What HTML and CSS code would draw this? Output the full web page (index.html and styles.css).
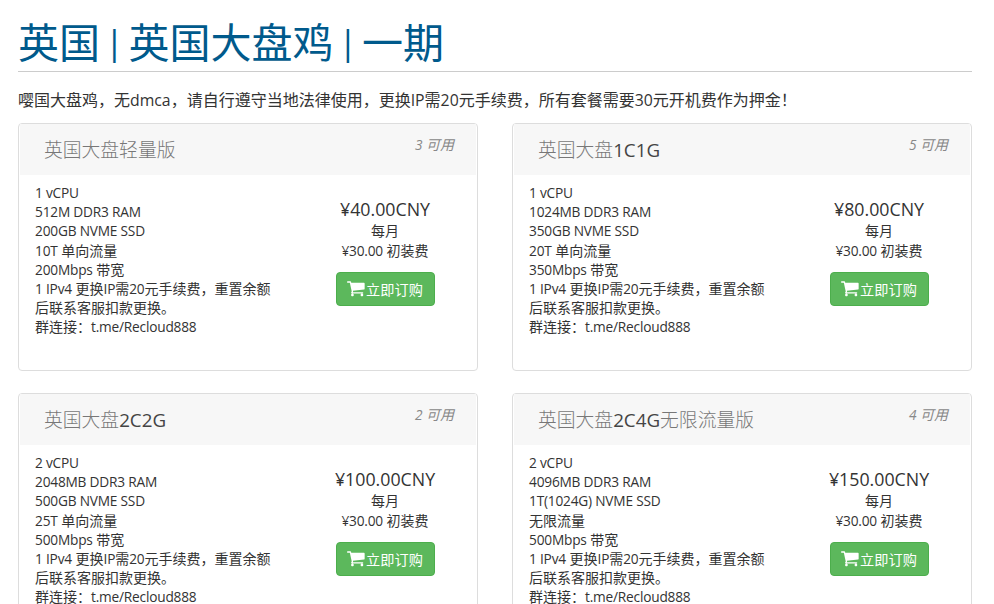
FILE: index.html
```html
<!DOCTYPE html>
<html lang="zh-CN">
<head>
<meta charset="utf-8">
<title>英国大盘鸡</title>
<link rel="stylesheet" href="styles.css">
</head>
<body>
<main class="page">
  <h1 class="title">英国 <span class="pipe">|</span> 英国大盘鸡 <span class="pipe">|</span> 一期</h1>
  <p class="intro">嘤国大盘鸡，无<span class="la">dmca</span>，请自行遵守当地法律使用，更换<span class="la">IP</span>需<span class="la">20</span>元手续费，所有套餐需要<span class="la">30</span>元开机费作为押金！</p>
  <div class="grid">
    <section class="card">
      <header class="card-head"><h2 class="card-title"><span class="cjk">英国大盘轻量版</span></h2><em class="avail"><span class="la">3</span> 可用</em></header>
      <div class="card-body">
        <div class="specs">
          <div class="la">1 vCPU</div>
          <div class="la">512M DDR3 RAM</div>
          <div class="la">200GB NVME SSD</div>
          <div><span class="la">10T</span> 单向流量</div>
          <div><span class="la">200Mbps</span> 带宽</div>
          <div><span class="la">1 IPv4</span> 更换<span class="la">IP</span>需<span class="la">20</span>元手续费，重置余额后联系客服扣款更换。</div>
          <div>群连接：<span class="la">t.me/Recloud888</span></div>
        </div>
        <div class="buy">
          <div class="price">¥40.00CNY</div>
          <div class="term">每月</div>
          <div class="setup"><span class="la">¥30.00</span> 初装费</div>
          <a class="btn" href="#"><svg class="cart" viewBox="0 0 1792 1792"><path d="M640 1408q0 52-38 90t-90 38-90-38-38-90 38-90 90-38 90 38 38 90zm896 0q0 52-38 90t-90 38-90-38-38-90 38-90 90-38 90 38 38 90zm128-1088v512q0 24-16.500 42.500t-40.500 21.500l-1044 122q13 60 13 70 0 16-24 64h920q26 0 45 19t19 45-19 45-45 19h-1024q-26 0-45-19t-19-45q0-11 8-31.500t16-36 21.500-40 15.500-29.500l-177-823h-204q-26 0-45-19t-19-45 19-45 45-19h256q16 0 28.500 6.500t19.500 15.500 13 24.500 8 26 5.500 29.500 4.500 26h1201q26 0 45 19t19 45z"/></svg>立即订购</a>
        </div>
      </div>
    </section>
    <section class="card">
      <header class="card-head"><h2 class="card-title"><span class="cjk">英国大盘</span>1C1G</h2><em class="avail"><span class="la">5</span> 可用</em></header>
      <div class="card-body">
        <div class="specs">
          <div class="la">1 vCPU</div>
          <div class="la">1024MB DDR3 RAM</div>
          <div class="la">350GB NVME SSD</div>
          <div><span class="la">20T</span> 单向流量</div>
          <div><span class="la">350Mbps</span> 带宽</div>
          <div><span class="la">1 IPv4</span> 更换<span class="la">IP</span>需<span class="la">20</span>元手续费，重置余额后联系客服扣款更换。</div>
          <div>群连接：<span class="la">t.me/Recloud888</span></div>
        </div>
        <div class="buy">
          <div class="price">¥80.00CNY</div>
          <div class="term">每月</div>
          <div class="setup"><span class="la">¥30.00</span> 初装费</div>
          <a class="btn" href="#"><svg class="cart" viewBox="0 0 1792 1792"><path d="M640 1408q0 52-38 90t-90 38-90-38-38-90 38-90 90-38 90 38 38 90zm896 0q0 52-38 90t-90 38-90-38-38-90 38-90 90-38 90 38 38 90zm128-1088v512q0 24-16.500 42.500t-40.500 21.500l-1044 122q13 60 13 70 0 16-24 64h920q26 0 45 19t19 45-19 45-45 19h-1024q-26 0-45-19t-19-45q0-11 8-31.500t16-36 21.500-40 15.500-29.500l-177-823h-204q-26 0-45-19t-19-45 19-45 45-19h256q16 0 28.500 6.500t19.500 15.500 13 24.500 8 26 5.500 29.500 4.500 26h1201q26 0 45 19t19 45z"/></svg>立即订购</a>
        </div>
      </div>
    </section>
    <section class="card">
      <header class="card-head"><h2 class="card-title"><span class="cjk">英国大盘</span>2C2G</h2><em class="avail"><span class="la">2</span> 可用</em></header>
      <div class="card-body">
        <div class="specs">
          <div class="la">2 vCPU</div>
          <div class="la">2048MB DDR3 RAM</div>
          <div class="la">500GB NVME SSD</div>
          <div><span class="la">25T</span> 单向流量</div>
          <div><span class="la">500Mbps</span> 带宽</div>
          <div><span class="la">1 IPv4</span> 更换<span class="la">IP</span>需<span class="la">20</span>元手续费，重置余额后联系客服扣款更换。</div>
          <div>群连接：<span class="la">t.me/Recloud888</span></div>
        </div>
        <div class="buy">
          <div class="price">¥100.00CNY</div>
          <div class="term">每月</div>
          <div class="setup"><span class="la">¥30.00</span> 初装费</div>
          <a class="btn" href="#"><svg class="cart" viewBox="0 0 1792 1792"><path d="M640 1408q0 52-38 90t-90 38-90-38-38-90 38-90 90-38 90 38 38 90zm896 0q0 52-38 90t-90 38-90-38-38-90 38-90 90-38 90 38 38 90zm128-1088v512q0 24-16.500 42.500t-40.500 21.500l-1044 122q13 60 13 70 0 16-24 64h920q26 0 45 19t19 45-19 45-45 19h-1024q-26 0-45-19t-19-45q0-11 8-31.500t16-36 21.500-40 15.500-29.500l-177-823h-204q-26 0-45-19t-19-45 19-45 45-19h256q16 0 28.500 6.500t19.500 15.500 13 24.500 8 26 5.500 29.500 4.500 26h1201q26 0 45 19t19 45z"/></svg>立即订购</a>
        </div>
      </div>
    </section>
    <section class="card">
      <header class="card-head"><h2 class="card-title"><span class="cjk">英国大盘</span>2C4G<span class="cjk">无限流量版</span></h2><em class="avail"><span class="la">4</span> 可用</em></header>
      <div class="card-body">
        <div class="specs">
          <div class="la">2 vCPU</div>
          <div class="la">4096MB DDR3 RAM</div>
          <div class="la">1T(1024G) NVME SSD</div>
          <div>无限流量</div>
          <div><span class="la">500Mbps</span> 带宽</div>
          <div><span class="la">1 IPv4</span> 更换<span class="la">IP</span>需<span class="la">20</span>元手续费，重置余额后联系客服扣款更换。</div>
          <div>群连接：<span class="la">t.me/Recloud888</span></div>
        </div>
        <div class="buy">
          <div class="price">¥150.00CNY</div>
          <div class="term">每月</div>
          <div class="setup"><span class="la">¥30.00</span> 初装费</div>
          <a class="btn" href="#"><svg class="cart" viewBox="0 0 1792 1792"><path d="M640 1408q0 52-38 90t-90 38-90-38-38-90 38-90 90-38 90 38 38 90zm896 0q0 52-38 90t-90 38-90-38-38-90 38-90 90-38 90 38 38 90zm128-1088v512q0 24-16.500 42.500t-40.500 21.500l-1044 122q13 60 13 70 0 16-24 64h920q26 0 45 19t19 45-19 45-45 19h-1024q-26 0-45-19t-19-45q0-11 8-31.500t16-36 21.500-40 15.500-29.500l-177-823h-204q-26 0-45-19t-19-45 19-45 45-19h256q16 0 28.500 6.500t19.500 15.500 13 24.500 8 26 5.500 29.500 4.500 26h1201q26 0 45 19t19 45z"/></svg>立即订购</a>
        </div>
      </div>
    </section>
  </div>
</main>
</body>
</html>
```

FILE: styles.css
```css
* { box-sizing: border-box; }
html, body { margin: 0; height: 604px; overflow: hidden; background: #fff; }
body {
  font-family: "Open Sans", "Noto Sans CJK SC", sans-serif;
  font-size: 14px;
  color: #333;
}
.page { padding: 0 22px 0 18px; }
.title {
  margin: 0;
  height: 72px;
  padding-top: 13px;
  font-size: 41px;
  line-height: 58px;
  font-weight: 400;
  word-spacing: -6px;
  color: #005a8c;
  border-bottom: 1px solid #ccc;
}
.pipe { font-size: 35px; line-height: 1; vertical-align: 3px; }
.intro {
  margin: 0;
  padding-top: 17px;
  height: 51px;
  font-size: 16px;
  line-height: 22px;
  color: #333;
}
.la { font-size: 13.7px; letter-spacing: -0.2px; }
span.la { line-height: 1; }
.intro .la { font-size: 15.8px; letter-spacing: 0; }
.grid {
  display: grid;
  grid-template-columns: 460px 460px;
  column-gap: 34px;
  row-gap: 22px;
  grid-auto-rows: 248px;
}
.card {
  border: 1px solid #ddd;
  border-radius: 4px;
  background: #fff;
}
.card-head {
  display: flex;
  justify-content: space-between;
  height: 51px;
  margin: 0 1px;
  padding: 0 22px 0 24px;
  background: #f7f7f7;
}
.card-title {
  margin: 0;
  padding-top: 13px;
  font-size: 18.8px;
  line-height: 26px;
  font-weight: 400;
  color: #444;
}
.cjk { color: #777; font-weight: 300; }
.avail {
  padding-top: 12px;
  font-size: 14px;
  line-height: 18px;
  color: #888;
}
.card-body {
  display: grid;
  grid-template-columns: 244px 180px;
  column-gap: 16px;
  padding: 8px 2px 0 16px;
}
.specs { line-height: 19.2px; }
.buy {
  display: flex;
  flex-direction: column;
  align-items: center;
  padding-top: 14px;
}
.price { font-size: 17.8px; line-height: 24px; color: #333; }
.term { line-height: 20px; }
.setup { line-height: 20px; }
.btn {
  display: flex;
  align-items: center;
  justify-content: center;
  width: 99px;
  height: 34px;
  margin-top: 11px;
  border-radius: 4px;
  background: #5cb85c;
  border: 1px solid #4cae4c;
  color: #fff;
  text-decoration: none;
  font-size: 14.2px;
}
.cart { width: 19px; height: 19px; fill: #fff; }
```
